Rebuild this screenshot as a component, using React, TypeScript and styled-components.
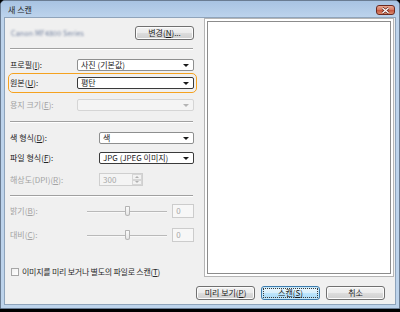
import styled, { createGlobalStyle } from "styled-components";

const GlobalStyle = createGlobalStyle`
  html, body {
    margin: 0;
    padding: 0;
    background: #000;
  }
  body {
    font-family: "Noto Sans CJK KR", "Noto Sans", sans-serif;
    font-size: 8px;
    line-height: 1;
  }
`;

const Window = styled.div`
  width: 400px;
  height: 309px;
  box-sizing: border-box;
  border: 1px solid #6a7c92;
  border-radius: 5px 5px 0 0;
  background: #bdd3eb;
  display: flex;
  flex-direction: column;
`;

const TitleBar = styled.div`
  height: 16px;
  flex: none;
  display: flex;
  align-items: center;
  justify-content: space-between;
  padding: 0 4px 0 7px;
  border-radius: 4px 4px 0 0;
  background: linear-gradient(#a8c3e2, #bcd3ec);
`;

const Title = styled.span`
  font-size: 8px;
  color: #1e1e1e;
  margin-top: 1px;
`;

const CloseButton = styled.div`
  width: 19px;
  height: 10px;
  margin-top: 2px;
  box-sizing: border-box;
  border: 1px solid #6b2a20;
  border-radius: 3px;
  background: linear-gradient(#e9a994, #d4775f 50%, #c4523c 50%, #d98a6c);
  display: flex;
  align-items: center;
  justify-content: center;
`;

const Client = styled.div`
  flex: 1;
  margin: 0 3px 3px 3px;
  border: 1px solid #8fa4bb;
  background: #f0f0f0;
  display: flex;
  flex-direction: column;
`;

const Main = styled.div`
  display: flex;
`;

const LeftPane = styled.div`
  width: 189px;
  box-sizing: border-box;
  padding: 9px 0 0 5px;
  display: flex;
  flex-direction: column;
`;

const DeviceRow = styled.div`
  height: 12px;
  display: flex;
  align-items: center;
  justify-content: space-between;
`;

const DeviceName = styled.span`
  font-size: 7px;
  color: #6a7a9a;
  filter: blur(0.8px);
  margin-left: 1px;
  letter-spacing: 0.2px;
`;

const Separator = styled.div<{ $top: number }>`
  margin-top: ${(p) => p.$top}px;
  height: 0;
  border-top: 1px solid #a0a0a0;
  border-bottom: 1px solid #ffffff;
  margin-right: 1px;
`;

const Row = styled.div<{ $top: number; $height?: number }>`
  margin-top: ${(p) => p.$top}px;
  height: ${(p) => p.$height ?? 12}px;
  display: flex;
  align-items: center;
`;

const Highlight = styled.div`
  margin: 2px -3px 0 -2px;
  padding: 3px 2px 3px 1px;
  border: 1px solid #f5a21f;
  border-radius: 5px;
  display: flex;
  align-items: center;
`;

const Label = styled.span<{ $width: number; $disabled?: boolean }>`
  width: ${(p) => p.$width}px;
  flex: none;
  color: ${(p) => (p.$disabled ? "#a3a3a3" : "#222222")};
  white-space: nowrap;
`;

const Combo = styled.div<{ $disabled?: boolean; $focused?: boolean }>`
  flex: 1;
  height: 12px;
  box-sizing: border-box;
  display: flex;
  align-items: center;
  justify-content: space-between;
  padding: 0 4px 0 3px;
  border: 1px solid
    ${(p) => (p.$focused ? "#3a3a3a" : p.$disabled ? "#d5d5d5" : "#8e8f8f")};
  border-radius: 2px;
  background: ${(p) => (p.$disabled ? "#f4f4f4" : "#ffffff")};
  color: #222222;
  white-space: nowrap;
`;

const Arrow = styled.span<{ $disabled?: boolean }>`
  width: 0;
  height: 0;
  border-left: 3px solid transparent;
  border-right: 3px solid transparent;
  border-top: 3px solid ${(p) => (p.$disabled ? "#b4b4b4" : "#1a1a1a")};
`;

const Spin = styled.div`
  width: 44px;
  height: 13px;
  box-sizing: border-box;
  border: 1px solid #cfcfcf;
  background: #f4f4f4;
  display: flex;
  align-items: center;
  justify-content: space-between;
  padding-left: 3px;
  color: #a8a8a8;
`;

const SpinButtons = styled.div`
  width: 9px;
  height: 100%;
  display: flex;
  flex-direction: column;
`;

const SpinButton = styled.div`
  flex: 1;
  border: 1px solid #d6d6d6;
  margin: 0 0 0 -1px;
  background: #f2f2f2;
  display: flex;
  align-items: center;
  justify-content: center;
`;

const TinyArrow = styled.span<{ $up?: boolean }>`
  width: 0;
  height: 0;
  border-left: 2px solid transparent;
  border-right: 2px solid transparent;
  ${(p) =>
    p.$up ? "border-bottom: 2px solid #b0b0b0;" : "border-top: 2px solid #b0b0b0;"}
`;

const Slider = styled.div`
  width: 81px;
  height: 13px;
  display: flex;
  align-items: center;
  justify-content: center;
  position: relative;
`;

const Track = styled.div`
  position: absolute;
  left: 0;
  right: 0;
  top: 6px;
  height: 0;
  border-top: 1px solid #b9b9b9;
  border-bottom: 1px solid #f8f8f8;
`;

const Thumb = styled.div`
  position: relative;
  width: 5px;
  height: 10px;
  box-sizing: border-box;
  margin-left: 1px;
  border: 1px solid #b4b4b4;
  border-radius: 1px 1px 3px 3px;
  background: linear-gradient(#fafafa, #e6e6e6);
`;

const ValueBox = styled.div`
  width: 22px;
  height: 14px;
  margin-left: 5px;
  box-sizing: border-box;
  border: 1px solid #cccccc;
  background: #f7f7f7;
  color: #a8a8a8;
  padding: 2px 0 0 3px;
`;

const CheckRow = styled.div`
  margin-top: 25px;
  height: 9px;
  display: flex;
  align-items: center;
  gap: 3px;
  margin-left: 1px;
  color: #2a2a2a;
  white-space: nowrap;
  letter-spacing: -0.25px;
`;

const CheckBox = styled.div`
  width: 8px;
  height: 8px;
  box-sizing: border-box;
  border: 1px solid #a6a6a6;
  background: linear-gradient(135deg, #f0f0f0, #ffffff);
`;

const Preview = styled.div`
  margin: 0 1px 0 10px;
  width: 190px;
  height: 259px;
  box-sizing: border-box;
  border: 1px solid #b5b5b5;
  background: #ffffff;
  padding: 2px;
`;

const PreviewInner = styled.div`
  height: 100%;
  box-sizing: border-box;
  border: 1px solid #8c8c8c;
  background: #ffffff;
`;

const Footer = styled.div`
  margin-top: 9px;
  padding-right: 10px;
  display: flex;
  justify-content: flex-end;
  gap: 6px;
`;

const Button = styled.div<{ $default?: boolean; $width?: number }>`
  width: ${(p) => p.$width ?? 59}px;
  height: 14px;
  box-sizing: border-box;
  border: 1px solid ${(p) => (p.$default ? "#3d7bad" : "#707070")};
  border-radius: 3px;
  background: ${(p) =>
    p.$default
      ? "linear-gradient(#eaf6fd, #d9f0fc 50%, #bee6fd 50%, #a7d9f5)"
      : "linear-gradient(#f2f2f2, #ebebeb 50%, #dddddd 50%, #cfcfcf)"};
  box-shadow: inset 0 0 0 1px ${(p) => (p.$default ? "#c6e9fb" : "#fcfcfc")};
  display: flex;
  align-items: center;
  justify-content: center;
  color: #1a1a1a;
  white-space: nowrap;
  padding: 1px;
`;

const FocusRect = styled.div`
  flex: 1;
  align-self: stretch;
  border: 1px dotted #3a3a3a;
  display: flex;
  align-items: center;
  justify-content: center;
`;

function App() {
  return (
    <>
      <GlobalStyle />
      <Window>
        <TitleBar>
          <Title>새 스캔</Title>
          <CloseButton>
            <svg width="9" height="7" viewBox="0 0 9 7">
              <path d="M1.5 1 L7.5 6 M7.5 1 L1.5 6" stroke="#5a1d14" strokeWidth="2.6" />
              <path d="M1.5 1 L7.5 6 M7.5 1 L1.5 6" stroke="#ffffff" strokeWidth="1.4" />
            </svg>
          </CloseButton>
        </TitleBar>
        <Client>
          <Main>
            <LeftPane>
              <DeviceRow>
                <DeviceName>Canon MF4800 Series</DeviceName>
                <Button>
                  변경(<u>N</u>)...
                </Button>
              </DeviceRow>
              <Separator $top={9} />
              <Row $top={9}>
                <Label $width={67}>
                  프로필(<u>I</u>):
                </Label>
                <Combo>
                  사진 (기본값)
                  <Arrow />
                </Combo>
              </Row>
              <Highlight>
                <Label $width={67}>
                  원본(<u>U</u>):
                </Label>
                <Combo $focused>
                  평탄
                  <Arrow />
                </Combo>
              </Highlight>
              <Row $top={6}>
                <Label $width={67} $disabled>
                  용지 크기(<u>E</u>):
                </Label>
                <Combo $disabled>
                  <span />
                  <Arrow $disabled />
                </Combo>
              </Row>
              <Separator $top={10} />
              <Row $top={9}>
                <Label $width={89}>
                  색 형식(<u>D</u>):
                </Label>
                <Combo>
                  색
                  <Arrow />
                </Combo>
              </Row>
              <Row $top={8}>
                <Label $width={89}>
                  파일 형식(<u>F</u>):
                </Label>
                <Combo $focused>
                  JPG (JPEG 이미지)
                  <Arrow />
                </Combo>
              </Row>
              <Row $top={9} $height={13}>
                <Label $width={89} $disabled>
                  해상도(DPI)(<u>R</u>):
                </Label>
                <Spin>
                  300
                  <SpinButtons>
                    <SpinButton>
                      <TinyArrow $up />
                    </SpinButton>
                    <SpinButton>
                      <TinyArrow />
                    </SpinButton>
                  </SpinButtons>
                </Spin>
              </Row>
              <Separator $top={9} />
              <Row $top={7} $height={14}>
                <Label $width={77} $disabled>
                  밝기(<u>B</u>):
                </Label>
                <Slider>
                  <Track />
                  <Thumb />
                </Slider>
                <ValueBox>0</ValueBox>
              </Row>
              <Row $top={10} $height={14}>
                <Label $width={77} $disabled>
                  대비(<u>C</u>):
                </Label>
                <Slider>
                  <Track />
                  <Thumb />
                </Slider>
                <ValueBox>0</ValueBox>
              </Row>
              <CheckRow>
                <CheckBox />
                <span>
                  이미지를 미리 보거나 별도의 파일로 스캔(<u>T</u>)
                </span>
              </CheckRow>
            </LeftPane>
            <Preview>
              <PreviewInner />
            </Preview>
          </Main>
          <Footer>
            <Button>
              미리 보기(<u>P</u>)
            </Button>
            <Button $default $width={59}>
              <FocusRect>
                스캔(<u>S</u>)
              </FocusRect>
            </Button>
            <Button>취소</Button>
          </Footer>
        </Client>
      </Window>
    </>
  );
}

export default App;
